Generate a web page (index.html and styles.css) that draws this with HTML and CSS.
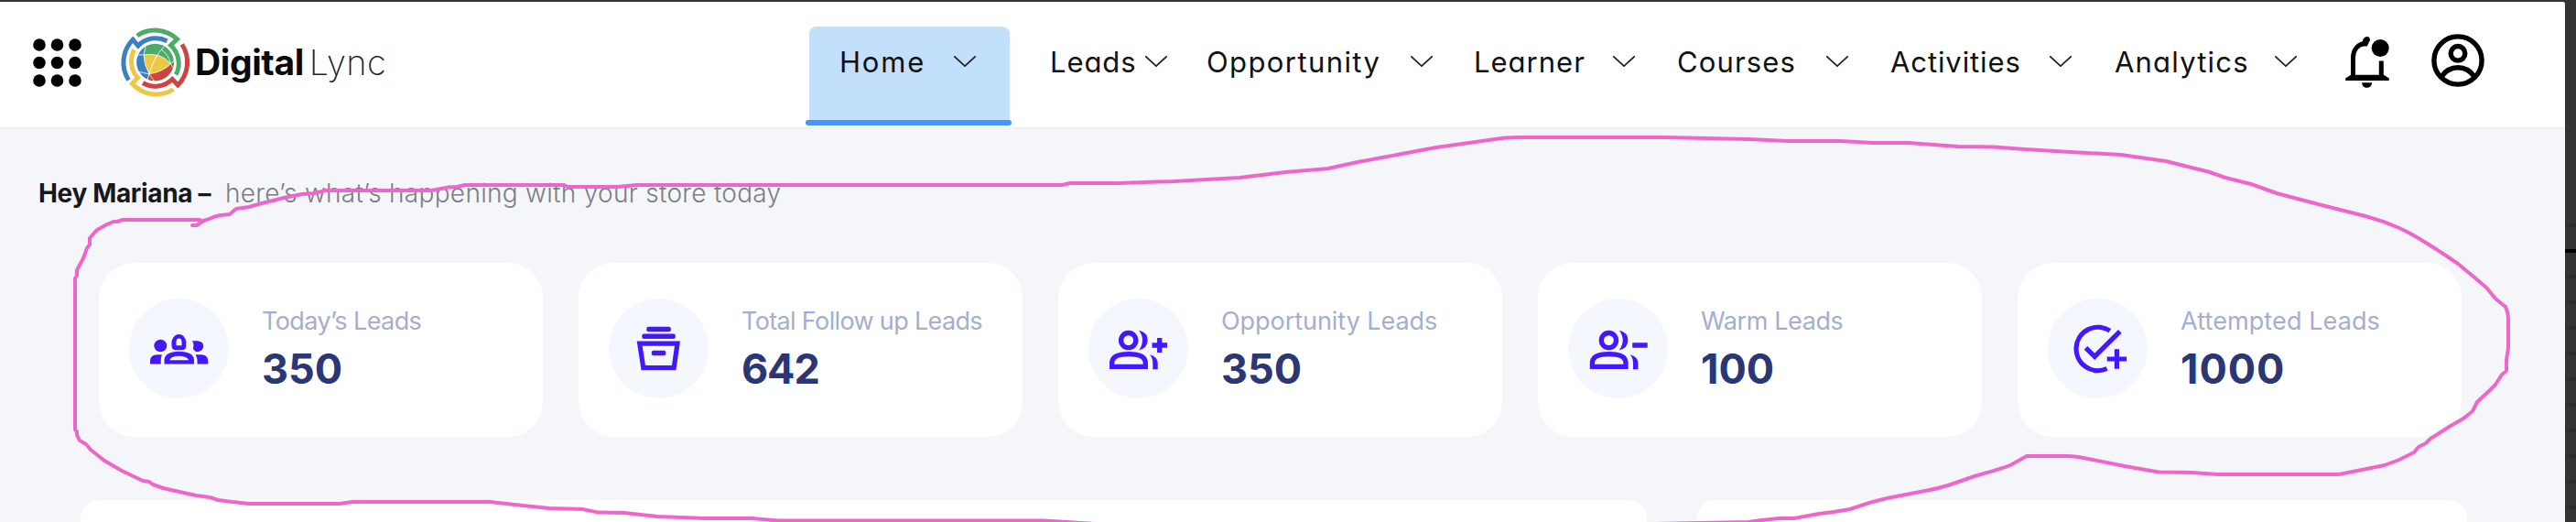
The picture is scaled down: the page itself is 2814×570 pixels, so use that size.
FILE: index.html
```
<!DOCTYPE html>
<html lang="en">
<head>
<meta charset="utf-8">
<title>Digital Lync</title>
<link rel="stylesheet" href="styles.css">
</head>
<body>
<div class="window">
  <div class="page">
    <header class="topbar">
      <svg class="apps" viewBox="0 0 54 54" width="54" height="54">
        <circle cx="7" cy="7" r="6.8"/><circle cx="26.5" cy="7" r="6.8"/><circle cx="46" cy="7" r="6.8"/>
        <circle cx="7" cy="26.5" r="6.8"/><circle cx="26.5" cy="26.5" r="6.8"/><circle cx="46" cy="26.5" r="6.8"/>
        <circle cx="7" cy="46" r="6.8"/><circle cx="26.5" cy="46" r="6.8"/><circle cx="46" cy="46" r="6.8"/>
      </svg>
      <div class="brand">
        <svg viewBox="10 8 80 80" width="80" height="80">
          <g fill="none" stroke-width="5">
            <path stroke="#4bab68" d="M29.8 19A35 35 0 0 1 73.5 22.8L66.5 29.5A26.5 26.5 0 0 1 72.2 61.5"/>
            <path stroke="#3b80c3" d="M20.5 67.5A35.5 35.5 0 0 1 25.2 23.3L30.8 30A26.5 26.5 0 0 1 62.5 24.8"/>
            <path stroke="#cd4440" d="M78.8 28.5A35.5 35.5 0 0 1 74.3 73L68.3 66.5A26.5 26.5 0 0 1 36 70.5"/>
            <path stroke="#ecc844" d="M69.5 77.5A35.5 35.5 0 0 1 24.3 71.3L30.5 65A26.5 26.5 0 0 1 26.6 34.3"/>
          </g>
          <circle cx="49.5" cy="48" r="20.3" fill="#4bab68"/>
          <path fill="#3b80c3" d="M37.5 32A20.3 20.3 0 0 0 40.5 66.3L43 60L37.5 40Z"/>
          <path fill="#cd4440" d="M69.8 48A20.3 20.3 0 0 1 41 66.4L43.5 60.5Q60 58 69.8 48Z"/>
          <path fill="#ecc844" stroke="#fff" stroke-width=".8" d="M37 39.8Q56 37 66.3 49.5Q58 58.5 43 60.8Q37 50 37 39.8Z"/>
          <path fill="none" stroke="#fff" stroke-width=".8" d="M59.5 30.5Q48 42 43 60.8L41 67M66.3 49.5L70 46.5M66.3 49.5L69 54M37 39.8L30 40M37 39.8L39 31M43 60.8L32 58.5M43 60.8L49 69M56 34Q64 39 66.3 49.5"/>
        </svg>
        <span class="word-bold">Digital</span><span class="word-thin">Lync</span>
      </div>
      <nav class="nav">
        <a class="item home active"><span>Home</span><svg class="chev" viewBox="0 0 24 12"><path d="M.8.8 12 11.2 23.2.8"/></svg></a>
        <a class="item leads"><span>Leads</span><svg class="chev" viewBox="0 0 24 12"><path d="M.8.8 12 11.2 23.2.8"/></svg></a>
        <a class="item opportunity"><span>Opportunity</span><svg class="chev" viewBox="0 0 24 12"><path d="M.8.8 12 11.2 23.2.8"/></svg></a>
        <a class="item learner"><span>Learner</span><svg class="chev" viewBox="0 0 24 12"><path d="M.8.8 12 11.2 23.2.8"/></svg></a>
        <a class="item courses"><span>Courses</span><svg class="chev" viewBox="0 0 24 12"><path d="M.8.8 12 11.2 23.2.8"/></svg></a>
        <a class="item activities"><span>Activities</span><svg class="chev" viewBox="0 0 24 12"><path d="M.8.8 12 11.2 23.2.8"/></svg></a>
        <a class="item analytics"><span>Analytics</span><svg class="chev" viewBox="0 0 24 12"><path d="M.8.8 12 11.2 23.2.8"/></svg></a>
      </nav>
      <svg class="bell" viewBox="0 0 48 58" width="48" height="58">
        <path fill="none" stroke="#000" stroke-width="5" d="M8.5 45V25C8.5 16.5 13.5 10.8 20.5 9.2V10M39.3 28.5V45"/>
        <path d="M18 12.5L19.2 5.5C20.3 3 22 2 24 2S27.2 4 26.8 6.2L23.8 12.500Z"/>
        <path d="M.2 50V47.5L6 43.8H42L47.8 47.5V50ZM18 52.2H29.2C28.8 56 26.5 57.8 23.6 57.8S18.4 56 18 52.2Z"/>
        <circle cx="38.2" cy="14.5" r="9.5"/>
      </svg>
      <svg class="avatar" viewBox="0 0 58 58" width="58" height="58">
        <g fill="none" stroke="#000" stroke-width="5.4">
          <circle cx="29" cy="29" r="26.1"/><circle cx="29" cy="21.3" r="7.8"/><path d="M11 46.6Q18 36.8 29 36.8T47 46.6"/>
        </g>
      </svg>
    </header>
    <main class="content">
      <p class="greeting"><b>Hey Mariana –</b><span>here’s what’s happening with your store today</span></p>
      <section class="stats">
        <article class="card">
          <svg class="badge" viewBox="0 0 109 109"><g fill="#4318ff">
            <ellipse cx="34.3" cy="51.5" rx="7" ry="6.7"/>
            <path d="M23 71.5V68Q23 61.5 31 61.3H36Q34.5 64 34.7 71.5Z"/>
            <path fill-rule="evenodd" d="M54.5 39Q60.5 39 62.3 47V51.5Q62 56.3 58 56.3H51Q46.7 56.3 46.5 51.5V47Q48.5 39 54.5 39ZM54.5 43.5Q51.8 43.7 51.5 47V51.2H57.5V47Q57.2 43.7 54.5 43.5Z"/>
            <path fill-rule="evenodd" d="M38.5 71.5V67Q39 58 54.5 57.7Q70.5 58 71 67V71.5ZM44.5 67.3H65Q63.5 63 54.5 62.8Q45.5 63 44.5 67.3Z"/>
            <path d="M69 46.2H75Q81.2 47 81.2 52T75 58.2Q71.5 58 69.8 54.5Q71.5 50 69 46.2ZM86.2 71.5V68Q86.2 61.5 78.5 61.3H72.5Q75 65 74.5 71.5Z"/>
          </g></svg>
          <div><h3 class="t1">Today’s Leads</h3><strong>350</strong></div>
        </article>
        <article class="card">
          <svg class="badge" viewBox="0 0 109 109"><g fill="#4318ff">
            <rect x="41.3" y="30.8" width="26.5" height="5.4" rx="2"/><rect x="36.3" y="38.5" width="36.5" height="5.4" rx="2"/>
            <path fill="none" stroke="#4318ff" stroke-width="5.2" d="M33.7 49.2H75L71.2 75.6H37.8Z"/><rect x="46.8" y="56.8" width="15.5" height="5.4" rx="2"/>
          </g></svg>
          <div><h3 class="t2">Total Follow up Leads</h3><strong class="n2">642</strong></div>
        </article>
        <article class="card">
          <svg class="badge" viewBox="0 0 109 109"><g fill="none" stroke="#4318ff" stroke-width="5.3">
            <circle cx="43.7" cy="45.6" r="8.1"/><path d="M25.7 74.4V70.5Q25.7 60.7 44 60.7T62.3 70.5V74.4Z"/><path d="M69.5 51H86M77.7 43V59"/>
            <path fill="#4318ff" stroke="none" d="M55 34.8Q64.7 37 64.7 45.6T55 56.5Q59 51.5 59 45.6T55 34.8ZM67 61.3Q75.7 63.5 75.7 71V77.2H70.3V71Q70.3 65 67 61.3Z"/>
          </g></svg>
          <div><h3 class="t3">Opportunity Leads</h3><strong>350</strong></div>
        </article>
        <article class="card">
          <svg class="badge" viewBox="0 0 109 109"><g fill="none" stroke="#4318ff" stroke-width="5.3">
            <circle cx="44.4" cy="45.6" r="8.1"/><path d="M26.4 74.4V70.5Q26.4 60.7 44.7 60.7T63 70.5V74.4Z"/><path d="M70.2 51H86.7"/>
            <path fill="#4318ff" stroke="none" d="M55.7 34.8Q65.4 37 65.4 45.6T55.7 56.5Q59.7 51.5 59.7 45.6T55.7 34.8ZM67.7 61.3Q76.4 63.5 76.4 71V77.2H71V71Q71 65 67.7 61.3Z"/>
          </g></svg>
          <div><h3 class="t4">Warm Leads</h3><strong>100</strong></div>
        </article>
        <article class="card">
          <svg class="badge" viewBox="0 0 109 109"><g fill="none" stroke="#4318ff" stroke-width="5.2">
            <path d="M67.8 35.2A23.7 23.7 0 1 0 64.6 76.5M41.5 53.8L51.2 63.3L78.8 35.8M64.7 66H86M75.4 55.2V76.7"/>
          </g></svg>
          <div><h3 class="t5">Attempted Leads</h3><strong class="n5">1000</strong></div>
        </article>
      </section>
      <section class="panels"><div class="panel"></div><div class="panel"></div></section>
    </main>
  </div>
  <aside class="gutter"></aside>
  <!-- freehand pen annotation over the page -->
  <svg class="ink" viewBox="0 0 2814 570"><path d="M210 246L215 246L222 241L226 240L233 237L241 235L251 234L258 228L272 226L286 222L310 216L330 212L343 211L356 208H471L490 204.500L499 204L508 202H616L620 204H675L696 202H1160L1169 200H1222L1283 198L1354 194L1404 188L1451 184L1483 177L1569 161L1626 153L1644 150.500L1661 150H1820L1910 152L1953 154H2010L2046 156H2085L2139 160L2178 160.500L2212 163L2245 165L2317 169L2366 176L2382 180L2414 188L2431 194L2459 201L2487 211L2540 225L2584 236Q2603 241 2621 249Q2634 255 2645 262Q2668 276 2685 288L2702 302L2716 314L2726 326L2737 335Q2740 341 2740 348V380L2738 393V405L2733 409L2726 420L2720 426L2706 439L2701 449L2691 457L2677 465L2655 479L2650 484L2642 488L2637 494L2621 502L2605 508L2560 517Q2557 518 2550 518H2423L2394 516L2358 515.500L2321 509L2281 501Q2268 498 2257 498H2214L2196 508Q2180 514 2160 519L2128 530Q2115 534 2103 536L2064 543.500Q2053 546 2042 549L2021 556L2003 559L1987 561L1960 566H1944L1924 568L1910 570L1806 572H1197L1140 568.500H850L821 566H771L718 564L682 560L654 559.600L636 556L600 555L571 552L535 548H385L371 550H272L253 548L238 546L229 543L214 541L178 533L167 529L163 526L156 525L133 514L114 503L99 491L94 485L87 481L84 475V471L82 469V304L84 301V295L91 282L95 271L98 267V260L106 251L117 245L124 242L128 242L134 240H217L220 241"/></svg>
</div>
</body>
</html>
```
FILE: styles.css
```
* { box-sizing: border-box; }
body { margin: 0; background: #333; font-family: Inter, sans-serif; }
.window { position: relative; display: flex; width: 2814px; height: 570px; padding-top: 2px; overflow: hidden; }
.page { width: 2802px; height: 568px; background: #f4f6fa; border-top-right-radius: 3px; overflow: hidden; }
.gutter {
  flex: 1;
  background:
    linear-gradient(#000, #000) 0 270px / 100% 4px no-repeat,
    repeating-linear-gradient(transparent 0 242px, #2d2d2d 242px 246px, transparent 246px 270px) 0 0 / 100% 270px no-repeat,
    repeating-linear-gradient(#333 0 24px, #2d2d2d 24px 28px) 0 274px / 100% 296px no-repeat;
}
.topbar { display: flex; align-items: flex-start; height: 139px; background: #fff; border-bottom: 2px solid #f0f0f0; }
.apps { flex: none; margin: 40px 0 0 36px; }
.brand { display: flex; align-items: flex-start; width: 754px; flex: none; margin: 26px 0 0 40px; }
.brand span { white-space: nowrap; color: #0a0a0a; line-height: 48px; margin-top: 16px; }
.word-bold { font-size: 39px; font-weight: 700; letter-spacing: -.4px; margin-left: 3px; }
.brand .word-thin { font-size: 38px; font-weight: 200; color: #222; margin-left: 6px; letter-spacing: .4px; }
.nav { display: flex; flex: none; width: 1678px; height: 136px; align-items: flex-start; }
.item { display: flex; flex: none; align-items: flex-start; justify-content: space-between; height: 102px; margin-top: 27px; padding-top: 20px; font-size: 31px; line-height: 38px; color: #111; font-feature-settings: "cv11"; white-space: nowrap; }
.chev { width: 24px; height: 12px; margin-top: 12px; fill: none; stroke: #222; stroke-width: 1.8; stroke-linecap: round; stroke-linejoin: round; }
.active { position: relative; background: #c2dffc; border-radius: 8px 8px 0 0; }
.active::after { content: ""; position: absolute; left: -4px; right: -2px; top: 102px; height: 6px; border-radius: 3px; background: #4795f8; }
.home { width: 219px; padding: 20px 37px 0 33px; letter-spacing: 1.8px; }
.leads { width: 128px; margin-left: 44px; letter-spacing: .9px; }
.opportunity { width: 247px; margin-left: 43px; letter-spacing: 1.4px; }
.learner { width: 176px; margin-left: 45px; letter-spacing: 1px; }
.courses { width: 187px; margin-left: 46px; letter-spacing: 1.15px; }
.activities { width: 198px; margin-left: 46px; letter-spacing: .9px; }
.analytics { width: 199px; margin-left: 47px; letter-spacing: 1.2px; }
.bell { flex: none; margin-top: 36px; }
.avatar { flex: none; margin: 35px 0 0 46px; }
.greeting { display: flex; margin: 0; padding: 51px 0 0 42px; font-size: 28px; line-height: 38px; white-space: nowrap; }
.greeting b { width: 204px; font-weight: 700; letter-spacing: -.35px; color: #17181c; }
.greeting span { font-weight: 300; letter-spacing: .3px; color: #7d7e84; }
.stats { display: grid; grid-template-columns: repeat(5, 485px); column-gap: 39px; padding: 57px 0 0 108px; }
.card { display: flex; height: 190px; padding: 39px 0 0 33px; background: #fff; border-radius: 38px; }
.badge { width: 109px; height: 109px; flex: none; border-radius: 50%; background: #f4f7fe; }
.card div { margin-left: 36px; padding-top: 5px; }
.card h3 { margin: 0; font-size: 27px; font-weight: 400; line-height: 40px; color: #a3aed0; white-space: nowrap; }
.card strong { display: block; margin-top: 9px; font-size: 45px; font-weight: 650; line-height: 46px; color: #2b3674; }
.t1 { letter-spacing: -.6px; }
.t2 { letter-spacing: -.65px; }
.t3 { letter-spacing: -.05px; }
.t4 { letter-spacing: -.4px; }
.t5 { letter-spacing: .1px; }
.n2 { letter-spacing: -1.1px; }
.n5 { letter-spacing: 1px; }
.panels { display: flex; gap: 55px; padding: 69px 0 0 88px; }
.panel { width: 1711px; height: 60px; flex: none; background: #fff; border-radius: 20px; }
.panel + .panel { width: 841px; }
.ink { position: absolute; left: 0; top: 0; width: 2814px; height: 570px; pointer-events: none; }
.ink path { fill: none; stroke: #ee66cc; stroke-width: 4; stroke-linecap: round; stroke-linejoin: round; }
```
